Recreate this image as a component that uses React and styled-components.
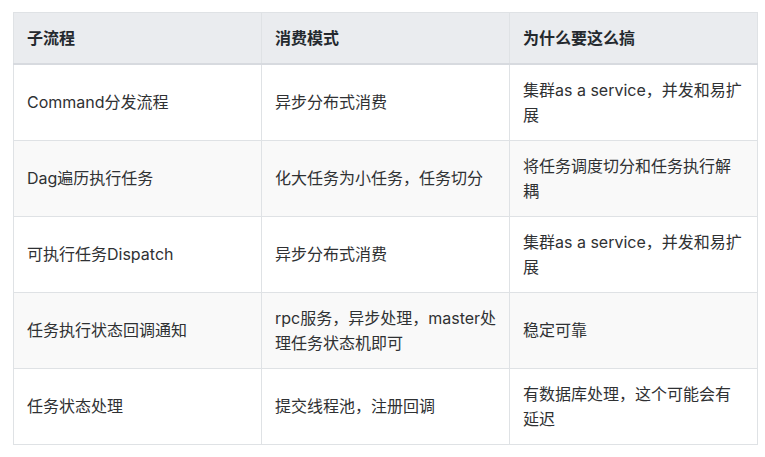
import React from "react";
import styled, { createGlobalStyle } from "styled-components";

const Global = createGlobalStyle`
  html, body { margin: 0; padding: 0; background: #ffffff; }
  body {
    font-family: "Inter", "Noto Sans CJK SC", sans-serif;
    color: #2f3133;
  }
`;

const Page = styled.div`
  padding: 12px 7px 12px 13px;
`;

const Table = styled.table`
  width: 745px;
  border-collapse: collapse;
  table-layout: fixed;
  font-size: 16px;
  line-height: 25px;
`;

const HeadCell = styled.th`
  text-align: left;
  font-weight: 600;
  background: #eaecef;
  border: 1px solid #dfe2e5;
  border-bottom: 2px solid #d7dadf;
  padding: 12.5px 12.5px 12.5px 13px;
  color: #24292e;
`;

const Row = styled.tr`
  background: ${(p) => (p.$striped ? "#f9f9f9" : "#ffffff")};
`;

const Cell = styled.td`
  border: 1px solid #dfe2e5;
  padding: 12.5px 12px 12.5px 13px;
  vertical-align: middle;
  color: #2f3133;
`;

const rows = [
  ["Command分发流程", "异步分布式消费", "集群as a service，并发和易扩展"],
  ["Dag遍历执行任务", "化大任务为小任务，任务切分", "将任务调度切分和任务执行解耦"],
  ["可执行任务Dispatch", "异步分布式消费", "集群as a service，并发和易扩展"],
  ["任务执行状态回调通知", "rpc服务，异步处理，master处理任务状态机即可", "稳定可靠"],
  ["任务状态处理", "提交线程池，注册回调", "有数据库处理，这个可能会有延迟"],
];

export default function App() {
  return (
    <Page>
      <Global />
      <Table>
        <thead>
          <tr>
            <HeadCell>子流程</HeadCell>
            <HeadCell>消费模式</HeadCell>
            <HeadCell>为什么要这么搞</HeadCell>
          </tr>
        </thead>
        <tbody>
          {rows.map((r, i) => (
            <Row key={i} $striped={i % 2 === 1}>
              {r.map((c, j) => (
                <Cell key={j}>{c}</Cell>
              ))}
            </Row>
          ))}
        </tbody>
      </Table>
    </Page>
  );
}
